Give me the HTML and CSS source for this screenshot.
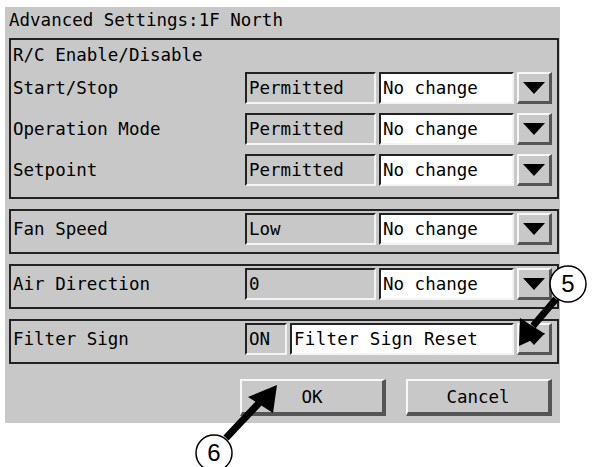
FILE: index.html
```html
<!DOCTYPE html>
<html lang="en">
<head>
    <meta charset="UTF-8">
    <title>Advanced Settings</title>
    <link rel="stylesheet" href="styles.css">
</head>
<body>
    <div class="page">
        <div class="panel">
            <div class="title">Advanced Settings:1F North</div>

            <div class="group">
                <div class="group-head">R/C Enable/Disable</div>
                <div class="row">
                    <span class="label">Start/Stop</span>
                    <span class="field">Permitted</span>
                    <span class="select">No change</span>
                    <span class="drop"><i class="tri"></i></span>
                </div>
                <div class="row">
                    <span class="label">Operation Mode</span>
                    <span class="field">Permitted</span>
                    <span class="select">No change</span>
                    <span class="drop"><i class="tri"></i></span>
                </div>
                <div class="row">
                    <span class="label">Setpoint</span>
                    <span class="field">Permitted</span>
                    <span class="select">No change</span>
                    <span class="drop"><i class="tri"></i></span>
                </div>
            </div>

            <div class="group single">
                <div class="row">
                    <span class="label">Fan Speed</span>
                    <span class="field">Low</span>
                    <span class="select">No change</span>
                    <span class="drop"><i class="tri"></i></span>
                </div>
            </div>

            <div class="group single">
                <div class="row">
                    <span class="label">Air Direction</span>
                    <span class="field">0</span>
                    <span class="select">No change</span>
                    <span class="drop"><i class="tri"></i></span>
                </div>
            </div>

            <div class="group single">
                <div class="row">
                    <span class="label">Filter Sign</span>
                    <span class="field small">ON</span>
                    <span class="select wide">Filter Sign Reset</span>
                    <span class="drop"><i class="tri"></i></span>
                </div>
            </div>

            <div class="buttons">
                <span class="btn">OK</span>
                <span class="btn">Cancel</span>
            </div>
        </div>

        <svg class="callouts" width="616" height="467" viewBox="0 0 616 467">
            <line x1="556" y1="299" x2="533" y2="326" stroke="#000" stroke-width="7"/>
            <polygon points="519,346 520,318 545,334" fill="#000"/>
            <circle cx="568" cy="284" r="18" fill="#fff" stroke="#000" stroke-width="1.5"/>
            <text x="568" y="292" text-anchor="middle" class="num">5</text>

            <line x1="226" y1="438" x2="259" y2="403" stroke="#000" stroke-width="7"/>
            <polygon points="277,385 273,413 248,397" fill="#000"/>
            <circle cx="214" cy="453" r="18" fill="#fff" stroke="#000" stroke-width="1.5"/>
            <text x="214" y="461" text-anchor="middle" class="num">6</text>
        </svg>
    </div>
</body>
</html>
```

FILE: styles.css
```css
body {
    margin: 0;
    background-color: #fff;
    font-family: "DejaVu Sans Mono", "Liberation Mono", monospace;
    font-size: 17.5px;
    color: #000;
}

.page {
    position: relative;
    width: 616px;
    height: 467px;
}

.panel {
    position: relative;
    top: 7px;
    left: 5px;
    width: 551px;
    height: 416px;
    padding: 0 0 0 4px;
    background-color: #c8c8c8;
    display: flex;
    flex-direction: column;
}

.title {
    height: 31px;
    line-height: 26px;
}

.group {
    width: 542px;
    border: 2px solid #222;
    padding: 0 2px 11px 2px;
    display: flex;
    flex-direction: column;
    gap: 9px;
    margin-bottom: 10px;
}

.group-head {
    height: 32px;
    line-height: 30px;
    margin-bottom: -9px;
}

.group.single {
    padding: 2px 2px 7px 2px;
}

.row {
    display: flex;
    align-items: center;
    height: 32px;
    gap: 3px;
}

.label {
    width: 229px;
    line-height: 32px;
}

.field,
.select {
    box-sizing: border-box;
    height: 32px;
    line-height: 28px;
    padding-left: 2px;
    border-top: 2px solid #222;
    border-left: 2px solid #222;
    border-right: 2px solid #f4f4f4;
    border-bottom: 2px solid #f4f4f4;
    white-space: nowrap;
    overflow: hidden;
}

.field {
    width: 131px;
    background-color: #c8c8c8;
}

.field.small {
    width: 42px;
}

.select {
    width: 135px;
    background-color: #fff;
}

.select.wide {
    width: 224px;
    letter-spacing: 0.3px;
}

.drop {
    box-sizing: border-box;
    width: 35px;
    height: 32px;
    background-color: #c8c8c8;
    border-top: 2px solid #f8f8f8;
    border-left: 2px solid #f8f8f8;
    border-right: 3px solid #555;
    border-bottom: 3px solid #555;
    display: flex;
    justify-content: center;
    align-items: center;
}

.tri {
    width: 0;
    height: 0;
    border-left: 11px solid transparent;
    border-right: 11px solid transparent;
    border-top: 12px solid #000;
}

.buttons {
    display: flex;
    gap: 20px;
    margin-top: 5px;
    padding-left: 231px;
}

.btn {
    box-sizing: border-box;
    width: 146px;
    height: 37px;
    line-height: 32px;
    text-align: center;
    background-color: #c8c8c8;
    border-top: 2px solid #f8f8f8;
    border-left: 2px solid #f8f8f8;
    border-right: 4px solid #555;
    border-bottom: 4px solid #555;
}

.callouts {
    position: absolute;
    top: 0;
    left: 0;
}

.num {
    font-family: "Liberation Sans", Arial, sans-serif;
    font-size: 24px;
}
```
